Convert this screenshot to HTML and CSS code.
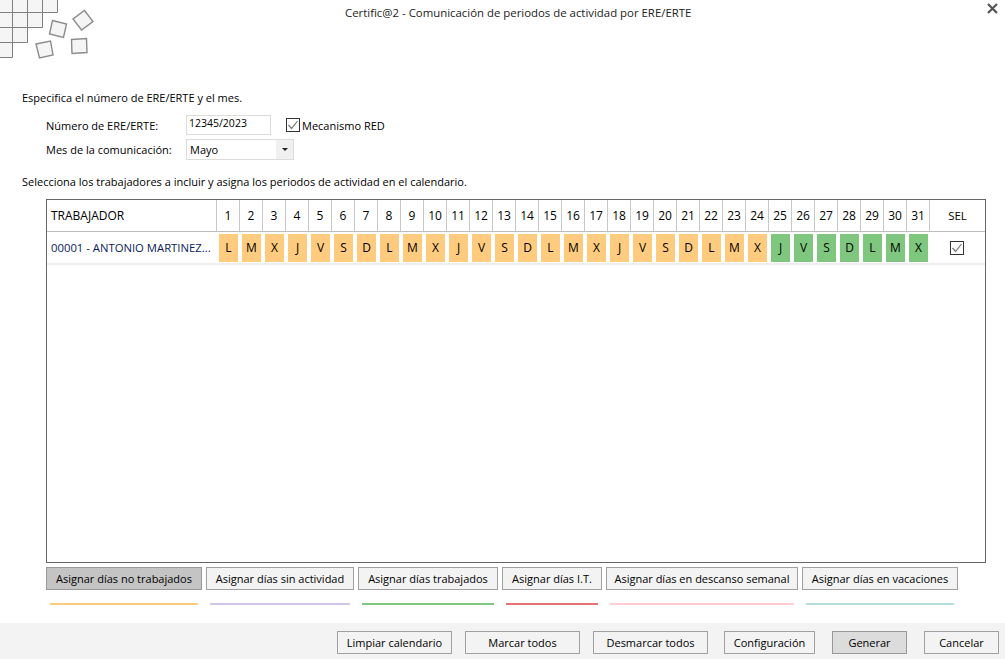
FILE: index.html
```html
<!DOCTYPE html>
<html lang="es">
<head>
  <meta charset="UTF-8">
  <title>Certific@2</title>
  <link rel="stylesheet" href="styles.css">
</head>
<body>
  <header class="header">
    <svg class="logo" width="100" height="60" viewBox="0 0 100 60">
      <g fill="#f5f5f5" stroke="#808080" stroke-width="1">
        <path d="M-1 -1H57.5V12.5H42.5V27.5H27.5V42.5H12.5V57.5H-1Z"/>
        <path d="M12.5 -1V42.5M27.5 -1V27.5M42.5 -1V12.5M-1 12.5H42.5M-1 27.5H27.5M-1 42.5H12.5" fill="none"/>
      </g>
      <g fill="#f5f5f5" stroke="#8c8c8c" stroke-width="1.4">
        <polygon points="52.5,20.5 66.5,24 63.5,37.5 49.5,34"/>
        <polygon points="84.5,10.5 93,21.5 81.5,30 73,19"/>
        <polygon points="36,44 50.5,41 53,55 39.5,58"/>
        <polygon points="71.5,39.5 86.5,38.5 87,52.5 72,53.5"/>
      </g>
    </svg>
    <h1 class="title">Certific@2 - Comunicación de periodos de actividad por ERE/ERTE</h1>
    <svg class="close" width="11" height="11" viewBox="0 0 11 11">
      <path d="M1 1L10 10M10 1L1 10" stroke="#555" stroke-width="2.2" fill="none"/>
    </svg>
  </header>

  <main class="content">
    <p class="intro">Especifica el número de ERE/ERTE y el mes.</p>
    <div class="form">
      <div class="form-row">
        <label class="form-label">Número de ERE/ERTE:</label>
        <div class="input">12345/2023</div>
        <span class="check check-red">
          <svg width="14" height="14" viewBox="0 0 14 14"><rect x="0.5" y="0.5" width="13" height="13" fill="#fff" stroke="#333"/><path d="M2.5 7L5.5 10.5L11.5 3" fill="none" stroke="#777" stroke-width="1.2"/></svg>
          Mecanismo RED
        </span>
      </div>
      <div class="form-row">
        <label class="form-label">Mes de la comunicación:</label>
        <div class="select">
          <span class="select-value">Mayo</span>
          <span class="select-arrow"></span>
        </div>
      </div>
    </div>
    <p class="intro intro-table">Selecciona los trabajadores a incluir y asigna los periodos de actividad en el calendario.</p>

    <div class="grid">
      <div class="grid-row grid-head">
        <div class="cell-name">TRABAJADOR</div>
        <div class="cell">1</div><div class="cell">2</div><div class="cell">3</div><div class="cell">4</div><div class="cell">5</div><div class="cell">6</div><div class="cell">7</div>
        <div class="cell">8</div><div class="cell">9</div><div class="cell">10</div><div class="cell">11</div><div class="cell">12</div><div class="cell">13</div><div class="cell">14</div>
        <div class="cell">15</div><div class="cell">16</div><div class="cell">17</div><div class="cell">18</div><div class="cell">19</div><div class="cell">20</div><div class="cell">21</div>
        <div class="cell">22</div><div class="cell">23</div><div class="cell">24</div><div class="cell">25</div><div class="cell">26</div><div class="cell">27</div><div class="cell">28</div>
        <div class="cell">29</div><div class="cell">30</div><div class="cell">31</div>
        <div class="cell cell-sel">SEL</div>
      </div>
      <div class="grid-row grid-worker">
        <div class="cell-name worker-name">00001 - ANTONIO MARTINEZ...</div>
        <div class="day">L</div><div class="day">M</div><div class="day">X</div><div class="day">J</div><div class="day">V</div><div class="day">S</div><div class="day">D</div>
        <div class="day">L</div><div class="day">M</div><div class="day">X</div><div class="day">J</div><div class="day">V</div><div class="day">S</div><div class="day">D</div>
        <div class="day">L</div><div class="day">M</div><div class="day">X</div><div class="day">J</div><div class="day">V</div><div class="day">S</div><div class="day">D</div>
        <div class="day">L</div><div class="day">M</div><div class="day">X</div>
        <div class="day day-work">J</div><div class="day day-work">V</div><div class="day day-work">S</div><div class="day day-work">D</div><div class="day day-work">L</div><div class="day day-work">M</div><div class="day day-work">X</div>
        <div class="cell-sel sel-check">
          <svg width="14" height="14" viewBox="0 0 14 14"><rect x="0.5" y="0.5" width="13" height="13" fill="#fff" stroke="#333"/><path d="M2.5 7L5.5 10.5L11.5 3" fill="none" stroke="#777" stroke-width="1.2"/></svg>
        </div>
      </div>
    </div>

    <div class="assign">
      <div class="assign-item"><button class="btn btn-active">Asignar días no trabajados</button><span class="line line-orange"></span></div>
      <div class="assign-item"><button class="btn btn-w148">Asignar días sin actividad</button><span class="line line-purple"></span></div>
      <div class="assign-item"><button class="btn btn-w140">Asignar días trabajados</button><span class="line line-green"></span></div>
      <div class="assign-item"><button class="btn btn-w100">Asignar días I.T.</button><span class="line line-red"></span></div>
      <div class="assign-item"><button class="btn btn-w192">Asignar días en descanso semanal</button><span class="line line-pink"></span></div>
      <div class="assign-item"><button class="btn btn-w156">Asignar días en vacaciones</button><span class="line line-teal"></span></div>
    </div>
  </main>

  <footer class="footer">
    <button class="btn btn-w115">Limpiar calendario</button>
    <button class="btn btn-w115">Marcar todos</button>
    <button class="btn btn-w115">Desmarcar todos</button>
    <button class="btn btn-w91 gap-mid">Configuración</button>
    <button class="btn btn-w75 btn-default gap-wide">Generar</button>
    <button class="btn btn-w75 gap-wide">Cancelar</button>
  </footer>
</body>
</html>
```

FILE: styles.css
```css
* {
  box-sizing: border-box;
}

body {
  margin: 0;
  height: 659px;
  display: flex;
  flex-direction: column;
  background: #fff;
  color: #000;
  font-family: 'Open Sans', 'Noto Sans', Arial, sans-serif;
  font-size: 11px;
  overflow: hidden;
}

.header {
  height: 84px;
  display: flex;
  align-items: flex-start;
  flex-shrink: 0;
}

.logo {
  flex-shrink: 0;
}

.title {
  margin: 5px 0 0 245px;
  font-size: 11.4px;
  font-weight: normal;
  line-height: 16px;
  color: #222;
}

.close {
  margin: 3px 7px 0 auto;
}

.content {
  flex: 1;
  padding: 0 19px 0 22px;
}

.intro {
  margin: 0;
  height: 28px;
  padding-top: 6px;
  line-height: 16px;
}

.intro-table {
  height: 26px;
  padding-top: 1px;
  margin-top: 13px;
}

.form {
  margin-left: 24px;
  margin-top: 3px;
}

.form-row {
  display: flex;
  align-items: center;
  height: 21px;
  margin-bottom: 3px;
}

.form-row:first-child {
  height: 20px;
  margin-bottom: 4px;
}

.form-label {
  width: 140px;
}

.input {
  width: 85px;
  height: 20px;
  padding: 0 2px;
  border: 1px solid #dcdcdc;
  font-size: 10.5px;
  line-height: 15px;
}

.check {
  display: flex;
  align-items: center;
  gap: 2px;
}

.check-red {
  margin-left: 15px;
}

.select {
  width: 108px;
  height: 21px;
  display: flex;
  border: 1px solid #dcdcdc;
}

.select-value {
  flex: 1;
  padding-left: 3px;
  line-height: 19px;
}

.select-arrow {
  width: 17px;
  background: #f0f0f0;
  display: flex;
  align-items: center;
  justify-content: center;
}

.select-arrow::after {
  content: '';
  border-left: 3px solid transparent;
  border-right: 3px solid transparent;
  border-top: 3px solid #222;
}

.grid {
  width: 940px;
  height: 364px;
  margin-left: 24px;
  border: 1px solid #666;
}

.grid-row {
  display: grid;
  grid-template-columns: 169px repeat(31, 23px) 1fr;
  font-size: 12px;
}

.grid-head {
  height: 32px;
  border-bottom: 1px solid #bdbdbd;
}

.grid-worker {
  height: 33px;
  border-bottom: 2px solid #eee;
}

.cell-name {
  padding-left: 4px;
  line-height: 31px;
  white-space: nowrap;
  overflow: hidden;
}

.worker-name {
  color: #0a1a5c;
  font-size: 11.3px;
}

.cell {
  border-left: 1px solid #c8c8c8;
  text-align: center;
  line-height: 31px;
}

.cell-sel {
  font-size: 11.5px;
  text-align: center;
}

.day {
  height: 28px;
  margin: 2px 1px 0 3px;
  background: #ffcc7f;
  text-align: center;
  line-height: 28px;
}

.day-work {
  background: #7fc77f;
}

.sel-check {
  display: flex;
  align-items: center;
  justify-content: center;
}

.assign {
  display: flex;
  gap: 4px;
  margin: 4px 0 0 24px;
}

.assign-item {
  display: flex;
  flex-direction: column;
}

.btn {
  height: 23px;
  padding: 0;
  background: #f3f3f3;
  border: 1px solid #a0a0a0;
  font-family: inherit;
  font-size: 11px;
  color: #000;
}

.assign .btn {
  width: 156px;
}

.assign .btn-active {
  background: #c4c4c4;
  border-color: #999;
}

.assign .btn-w148 { width: 148px; }
.assign .btn-w140 { width: 140px; }
.assign .btn-w100 { width: 100px; }
.assign .btn-w192 { width: 192px; }
.assign .btn-w156 { width: 156px; }

.line {
  height: 2px;
  margin: 13px 4px 0;
}

.line-orange { background: #ffcc7f; }
.line-purple { background: #cfc6e8; }
.line-green { background: #7fc77f; }
.line-red { background: #e57373; }
.line-pink { background: #ffcdd2; }
.line-teal { background: #b2dfdb; }

.footer {
  height: 36px;
  flex-shrink: 0;
  display: flex;
  gap: 13px;
  justify-content: flex-end;
  padding: 8px 6px 0 0;
  background: #f3f3f3;
}

.btn-w115 { width: 115px; }
.btn-w91 { width: 91px; }
.btn-w75 { width: 75px; }

.gap-mid {
  margin-left: 3px;
}

.gap-wide {
  margin-left: 4px;
}

.btn-default {
  background: #dcdcdc;
  border-color: #999;
}
```
